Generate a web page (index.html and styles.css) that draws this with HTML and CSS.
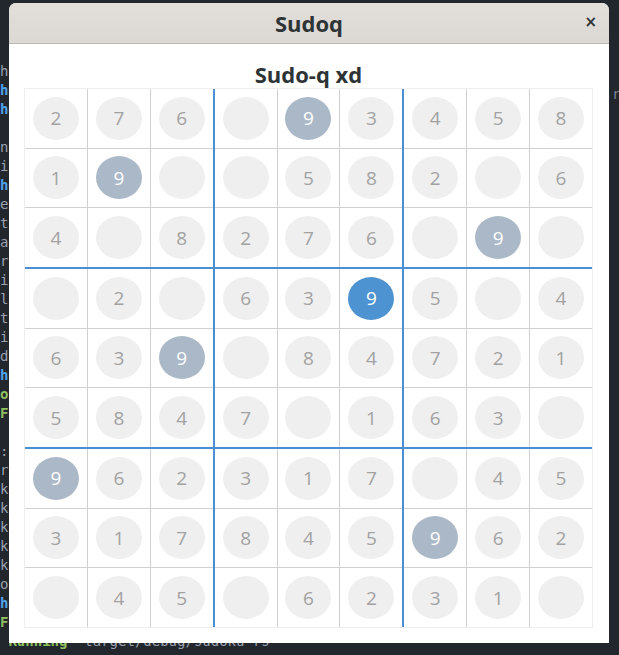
FILE: index.html
```html
<!DOCTYPE html>
<html>
<head>
<meta charset="utf-8">
<link rel="stylesheet" href="styles.css">
</head>
<body>
<pre class="term"><span class="g">ha</span>
<span class="b">he</span>
<span class="b">he</span>
<span class="g"> r</span>
<span class="g">n</span>
<span class="g">i</span>
<span class="b">he</span>
<span class="g">e</span>
<span class="g">t</span>
<span class="g">a</span>
<span class="g">r</span>
<span class="g">i</span>
<span class="g">l</span>
<span class="g">t</span>
<span class="g">i</span>
<span class="g">d</span>
<span class="b">he</span>
<span class="k">or</span>
<span class="k">F</span>
<span class="k"> I</span>
<span class="g">:</span>
<span class="g">r</span>
<span class="g">k</span>
<span class="g">k</span>
<span class="g">k</span>
<span class="g">k</span>
<span class="g">k</span>
<span class="g">o</span>
<span class="b">he</span>
<span class="k">F</span>
<span class="k"> Running</span> <span class="g">`target/debug/sudoku-rs`</span></pre>
<span class="term-r">r</span>

<div class="window">
  <header class="titlebar">
    <span class="title">Sudoq</span>
    <span class="close">×</span>
  </header>
  <main class="content">
    <h1 class="heading">Sudo-q xd</h1>
    <div class="board">
      <div class="block">
        <div class="cell"><span class="num">2</span></div>
        <div class="cell"><span class="num">7</span></div>
        <div class="cell"><span class="num">6</span></div>
        <div class="cell"><span class="num">1</span></div>
        <div class="cell"><span class="num hl">9</span></div>
        <div class="cell"><span class="num"></span></div>
        <div class="cell"><span class="num">4</span></div>
        <div class="cell"><span class="num"></span></div>
        <div class="cell"><span class="num">8</span></div>
      </div>
      <div class="block">
        <div class="cell"><span class="num"></span></div>
        <div class="cell"><span class="num hl">9</span></div>
        <div class="cell"><span class="num">3</span></div>
        <div class="cell"><span class="num"></span></div>
        <div class="cell"><span class="num">5</span></div>
        <div class="cell"><span class="num">8</span></div>
        <div class="cell"><span class="num">2</span></div>
        <div class="cell"><span class="num">7</span></div>
        <div class="cell"><span class="num">6</span></div>
      </div>
      <div class="block">
        <div class="cell"><span class="num">4</span></div>
        <div class="cell"><span class="num">5</span></div>
        <div class="cell"><span class="num">8</span></div>
        <div class="cell"><span class="num">2</span></div>
        <div class="cell"><span class="num"></span></div>
        <div class="cell"><span class="num">6</span></div>
        <div class="cell"><span class="num"></span></div>
        <div class="cell"><span class="num hl">9</span></div>
        <div class="cell"><span class="num"></span></div>
      </div>
      <div class="block">
        <div class="cell"><span class="num"></span></div>
        <div class="cell"><span class="num">2</span></div>
        <div class="cell"><span class="num"></span></div>
        <div class="cell"><span class="num">6</span></div>
        <div class="cell"><span class="num">3</span></div>
        <div class="cell"><span class="num hl">9</span></div>
        <div class="cell"><span class="num">5</span></div>
        <div class="cell"><span class="num">8</span></div>
        <div class="cell"><span class="num">4</span></div>
      </div>
      <div class="block">
        <div class="cell"><span class="num">6</span></div>
        <div class="cell"><span class="num">3</span></div>
        <div class="cell"><span class="num sel">9</span></div>
        <div class="cell"><span class="num"></span></div>
        <div class="cell"><span class="num">8</span></div>
        <div class="cell"><span class="num">4</span></div>
        <div class="cell"><span class="num">7</span></div>
        <div class="cell"><span class="num"></span></div>
        <div class="cell"><span class="num">1</span></div>
      </div>
      <div class="block">
        <div class="cell"><span class="num">5</span></div>
        <div class="cell"><span class="num"></span></div>
        <div class="cell"><span class="num">4</span></div>
        <div class="cell"><span class="num">7</span></div>
        <div class="cell"><span class="num">2</span></div>
        <div class="cell"><span class="num">1</span></div>
        <div class="cell"><span class="num">6</span></div>
        <div class="cell"><span class="num">3</span></div>
        <div class="cell"><span class="num"></span></div>
      </div>
      <div class="block">
        <div class="cell"><span class="num hl">9</span></div>
        <div class="cell"><span class="num">6</span></div>
        <div class="cell"><span class="num">2</span></div>
        <div class="cell"><span class="num">3</span></div>
        <div class="cell"><span class="num">1</span></div>
        <div class="cell"><span class="num">7</span></div>
        <div class="cell"><span class="num"></span></div>
        <div class="cell"><span class="num">4</span></div>
        <div class="cell"><span class="num">5</span></div>
      </div>
      <div class="block">
        <div class="cell"><span class="num">3</span></div>
        <div class="cell"><span class="num">1</span></div>
        <div class="cell"><span class="num">7</span></div>
        <div class="cell"><span class="num">8</span></div>
        <div class="cell"><span class="num">4</span></div>
        <div class="cell"><span class="num">5</span></div>
        <div class="cell"><span class="num"></span></div>
        <div class="cell"><span class="num">6</span></div>
        <div class="cell"><span class="num">2</span></div>
      </div>
      <div class="block">
        <div class="cell"><span class="num"></span></div>
        <div class="cell"><span class="num">4</span></div>
        <div class="cell"><span class="num">5</span></div>
        <div class="cell"><span class="num hl">9</span></div>
        <div class="cell"><span class="num">6</span></div>
        <div class="cell"><span class="num">2</span></div>
        <div class="cell"><span class="num">3</span></div>
        <div class="cell"><span class="num">1</span></div>
        <div class="cell"><span class="num"></span></div>
      </div>
    </div>
  </main>
</div>
</body>
</html>
```
FILE: styles.css
```css
* { box-sizing: border-box; }
html, body {
  margin: 0;
  padding: 0;
  width: 619px;
  height: 655px;
  overflow: hidden;
}
body {
  background: #22262d;
  position: relative;
  font-family: "Open Sans", "DejaVu Sans", sans-serif;
}

/* terminal behind the window */
.term {
  position: absolute;
  left: 0;
  top: 62px;
  margin: 0;
  font-family: "DejaVu Sans Mono", monospace;
  font-size: 14px;
  line-height: 19px;
  color: #9aa1ad;
}
.term .g { color: #9aa1ad; }
.term .b { color: #4fa3e8; font-weight: bold; }
.term .k { color: #8fbf5f; font-weight: bold; }
.term-r {
  position: absolute;
  left: 612px;
  top: 86px;
  font-family: "DejaVu Sans Mono", monospace;
  font-size: 14px;
  color: #7d838e;
}

/* window */
.window {
  position: absolute;
  left: 9px;
  top: 3px;
  width: 600px;
  height: 640px;
  background: #ffffff;
  border-radius: 7px 7px 0 0;
  display: flex;
  flex-direction: column;
  overflow: hidden;
}
.titlebar {
  height: 41px;
  flex: none;
  background: linear-gradient(#e2dfdb, #dcd8d4);
  border-bottom: 1px solid #bdb7b0;
  display: flex;
  align-items: center;
  justify-content: center;
  position: relative;
}
.title {
  font-family: "Open Sans", sans-serif;
  font-weight: 700;
  font-size: 22px;
  color: #2e3436;
}
.close {
  position: absolute;
  right: 12px;
  top: 10px;
  font-family: "DejaVu Sans", sans-serif;
  font-weight: bold;
  font-size: 15px;
  color: #2e3436;
}

.content {
  flex: 1;
  display: flex;
  flex-direction: column;
  align-items: flex-start;
  padding: 16px 16px 15px 15px;
}
.heading {
  margin: 0;
  align-self: center;
  height: 28px;
  line-height: 28px;
  font-family: "Open Sans", sans-serif;
  font-weight: 700;
  font-size: 22px;
  color: #2e3436;
}
.board {
  width: 569px;
  height: 540px;
  border: 1px solid #eeeeee;
  background: #4a8fd3;
  display: grid;
  grid-template-columns: repeat(3, 1fr);
  grid-template-rows: repeat(3, 1fr);
  gap: 2px;
}
.block {
  background: #d0d0d0;
  display: grid;
  grid-template-columns: repeat(3, 1fr);
  grid-template-rows: repeat(3, 1fr);
  gap: 1px;
}
.cell {
  background: #ffffff;
  display: flex;
  align-items: center;
  justify-content: center;
}
.num {
  width: 46px;
  height: 43px;
  border-radius: 50%;
  background: #efefef;
  color: #a2a2a2;
  font-family: "Open Sans", sans-serif;
  font-size: 19px;
  font-weight: 400;
  display: flex;
  align-items: center;
  justify-content: center;
}
.num.hl {
  background: #abb8c8;
  color: #ffffff;
}
.num.sel {
  background: #4e93d1;
  color: #ffffff;
}
```
